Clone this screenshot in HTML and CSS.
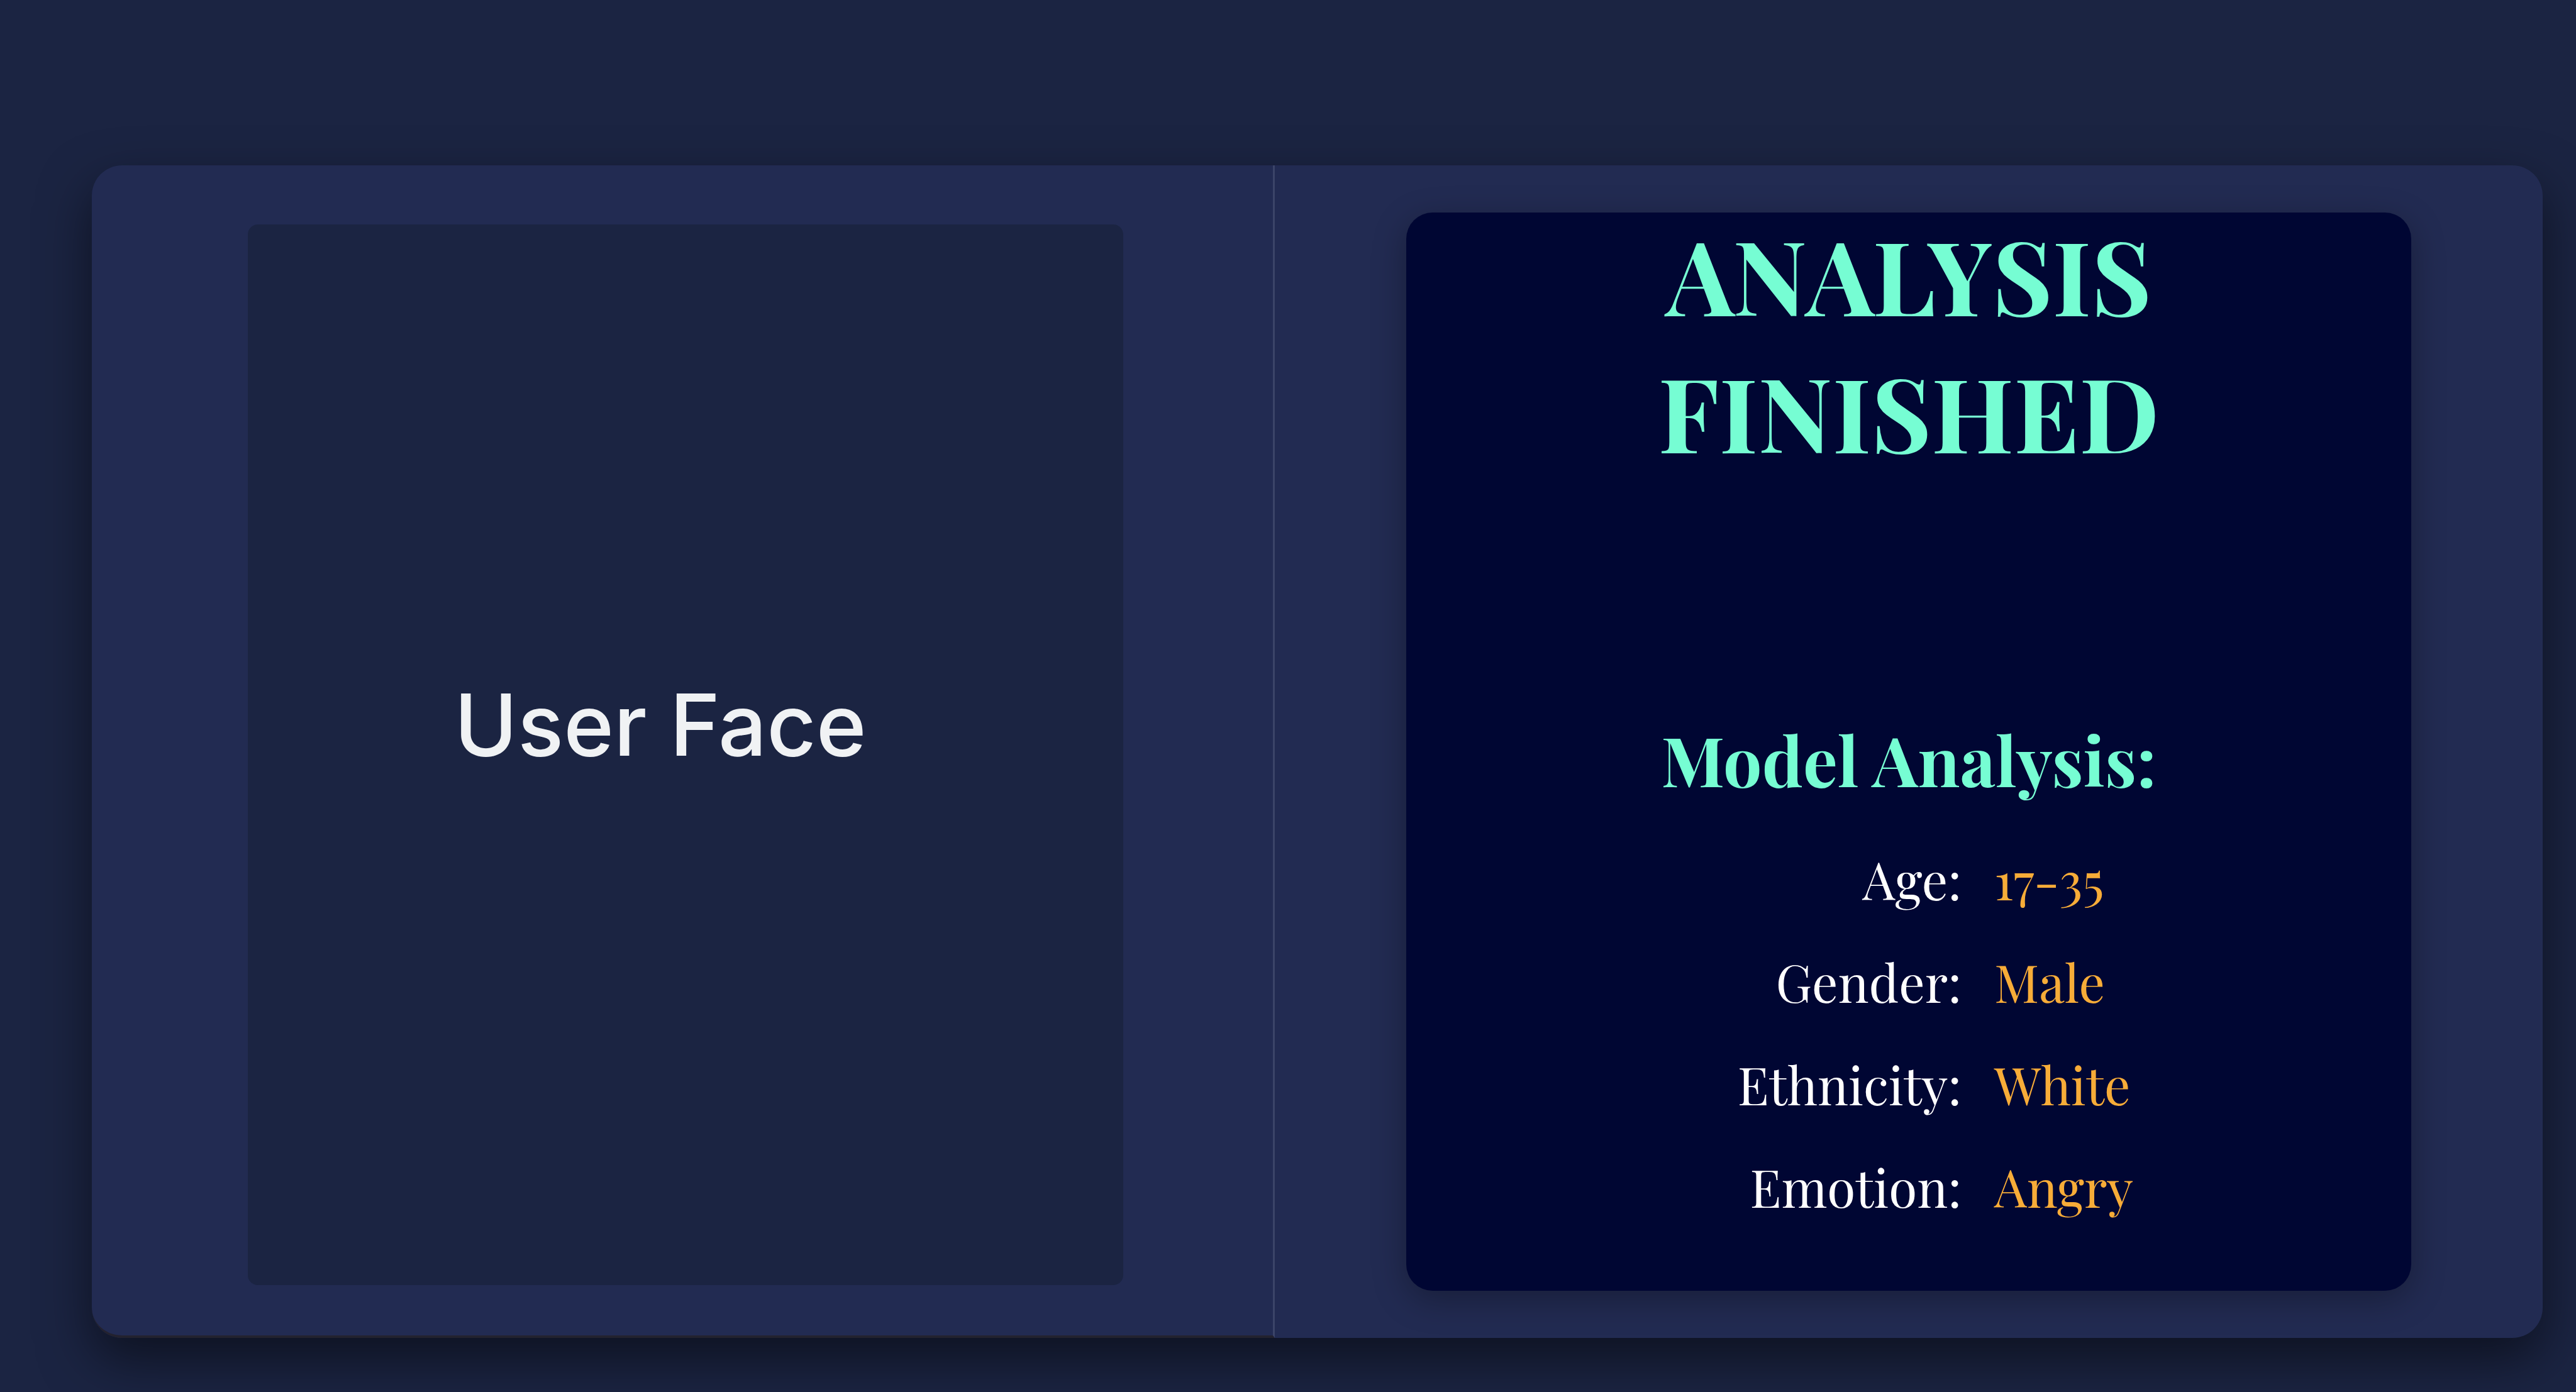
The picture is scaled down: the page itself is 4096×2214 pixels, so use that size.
FILE: index.html
```html
<!DOCTYPE html>
<html lang="en">
<head>
<meta charset="utf-8">
<title>Analysis Finished</title>
<link rel="stylesheet" href="styles.css">
</head>
<body>
<main class="card">
  <section class="panel panel-face">
    <div class="face"><span class="face-label">User Face</span></div>
  </section>
  <section class="panel panel-result">
    <div class="result">
      <h1 class="title">ANALYSIS<br>FINISHED</h1>
      <h2 class="subtitle">Model Analysis:</h2>
      <dl class="facts">
        <dt>Age:</dt><dd>17-35</dd>
        <dt>Gender:</dt><dd>Male</dd>
        <dt>Ethnicity:</dt><dd>White</dd>
        <dt>Emotion:</dt><dd>Angry</dd>
      </dl>
    </div>
  </section>
</main>
</body>
</html>
```
FILE: styles.css
```css
* {
  box-sizing: border-box;
  margin: 0;
}

body {
  min-height: 100vh;
  padding: 263px 53px 86px 146px;
  display: flex;
  background: #1b2442;
  font-family: "Playfair Display", "Liberation Serif", serif;
}

.card {
  flex: 1;
  display: grid;
  grid-template-columns: 1881fr 2016fr;
  border-radius: 48px;
  background: #222b52;
  box-shadow: 0 34px 82px rgba(0, 0, 0, 0.5);
}

.panel {
  display: flex;
}

.panel-face {
  padding: 94px 238px 80px 248px;
  border-right: 3px solid #3b4468;
  border-bottom: 4px solid #23222f;
  border-bottom-left-radius: 48px;
}

.face {
  flex: 1;
  display: flex;
  align-items: center;
  justify-content: center;
  padding: 0 80px 96px 0;
  border-radius: 16px;
  background: #1b2442;
}

.face-label {
  color: #f0f2f4;
  font: 500 136px/168px Inter, sans-serif;
}

.panel-result {
  padding: 75px 209px;
}

.result {
  flex: 1;
  display: flex;
  flex-direction: column;
  align-items: center;
  padding-bottom: 84px;
  border-radius: 42px;
  background: #000633;
  box-shadow: 0 14px 54px rgba(0, 0, 0, 0.3);
}

.title {
  margin-top: -12px;
  color: #76fdd3;
  font-size: 164px;
  line-height: 218px;
  text-align: center;
}

.subtitle {
  margin-top: auto;
  color: #76fdd3;
  font-size: 109px;
  line-height: 160px;
}

.facts {
  width: 100%;
  padding-top: 30px;
  display: grid;
  grid-template-columns: 883fr 663fr;
  column-gap: 52px;
  color: #fff;
  font-size: 82px;
  line-height: 163px;
}

.facts dt {
  text-align: right;
}

.facts dd {
  color: #f7ac38;
}
```
